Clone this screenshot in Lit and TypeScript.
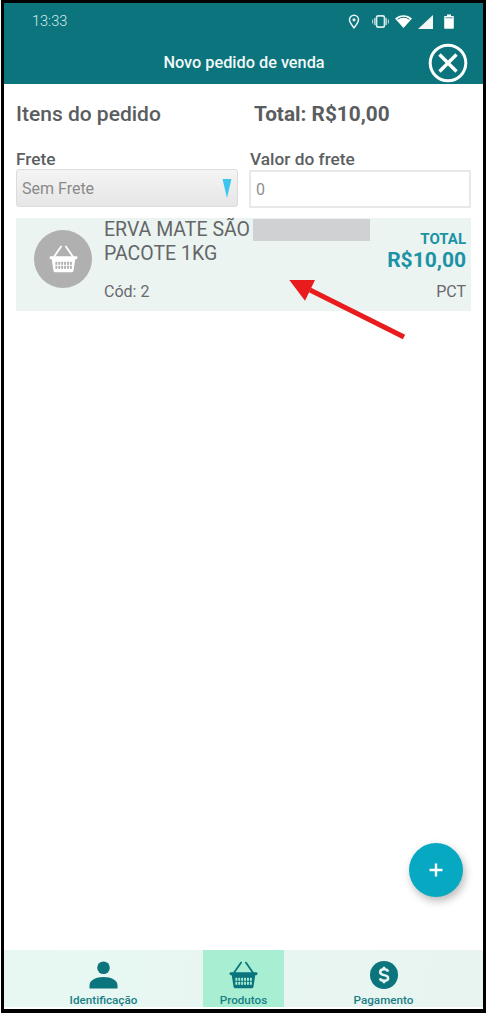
import { LitElement, html, css, svg } from "lit";
import { customElement } from "lit/decorators.js";

const basket = (fg: string, hole: string) => svg`
  <path d="M4 12.5 L11.6 1.6 M24 12.5 L16.4 1.6" stroke="${fg}" stroke-width="1.8" stroke-linecap="round" fill="none"/>
  <rect x="0" y="11.2" width="28" height="3" rx="1.4" fill="${fg}"/>
  <path d="M2.2 14 H25.8 L24 25.8 A1.6 1.6 0 0 1 22.4 27.2 H5.6 A1.6 1.6 0 0 1 4 25.8 Z" fill="${fg}"/>
  ${[0, 1, 2, 3, 4, 5].map((c) =>
    [0, 1].map(
      (r) => svg`<rect x="${5.9 + c * 2.9}" y="${16.8 + r * 4}" width="1.9" height="3" fill="${hole}"/>`
    )
  )}
`;

@customElement("app-root")
export class AppRoot extends LitElement {
  static styles = css`
    :host {
      display: block;
      width: 486px;
      height: 1024px;
      background: #fff;
      font-family: Roboto, "Liberation Sans", sans-serif;
      color: #5c5c5c;
      overflow: hidden;
    }
    * { box-sizing: border-box; }
    .frame {
      position: relative;
      display: flex;
      flex-direction: column;
      width: 485px;
      height: 1013px;
      margin-left: 1px;
      border: solid #000;
      border-width: 3px 3px 4px 3px;
      background: #fff;
    }
    .header {
      height: 81px;
      background: #0b747c;
      color: #fff;
      flex: none;
    }
    .status {
      height: 37px;
      display: flex;
      align-items: center;
      padding: 0 29px 0 28px;
      color: #dcecec;
      font-size: 14.5px;
    }
    .time { flex: 1; font-weight: 300; }
    .sicons { display: flex; align-items: center; gap: 6px; }
    .sicons svg { display: block; }
    .titlebar {
      position: relative;
      display: flex;
      justify-content: center;
      padding: 13px 0 0 1px;
      font-size: 16.3px;
      font-weight: 500;
      color: #f2f8f8;
    }
    .close { position: absolute; right: 15px; top: 3px; }
    .content {
      flex: 1;
      padding: 0 12px;
    }
    .totals {
      display: flex;
      align-items: baseline;
      padding-top: 18px;
      height: 66px;
      font-size: 21px;
      font-weight: 500;
      color: #5a5d60;
    }
    .totals .l { width: 238px; }
    .totals .t { font-weight: 700; font-size: 20.8px; }
    .form {
      display: grid;
      grid-template-columns: 222px 222px;
      column-gap: 11px;
    }
    .field label {
      display: block;
      font-size: 17.3px;
      font-weight: 500;
      color: #5c5f62;
      height: 21px;
      line-height: 21px;
      margin-top: -1px;
    }
    .field + .field label { padding-left: 1px; }
    .select {
      position: relative;
      height: 38px;
      margin-top: -1px;
      display: flex;
      align-items: center;
      padding-left: 5px;
      border: 1px solid #dcdcdc;
      border-radius: 3px;
      background: linear-gradient(#f4f4f4, #e6e6e6);
      font-size: 16px;
      color: #8a8a8a;
    }
    .caret { position: absolute; right: 5px; top: 9px; }
    .input {
      height: 38px;
      display: flex;
      align-items: center;
      padding-left: 5px;
      border: 2px solid #e8e8e8;
      font-size: 16px;
      color: #8f8f8f;
    }
    .item {
      position: relative;
      display: flex;
      height: 93px;
      margin-top: 10px;
      background: #ecf4f2;
    }
    .avatar {
      flex: none;
      width: 58px;
      height: 58px;
      margin: 12px 12px 0 18px;
      border-radius: 50%;
      background: #b0b0b0;
      display: flex;
      align-items: center;
      justify-content: center;
    }
    .info { flex: 1; min-width: 0; }
    .name {
      font-size: 19.5px;
      line-height: 24px;
      color: #646668;
      height: 65px;
    }
    .code { font-size: 16px; color: #68696b; line-height: 18px; }
    .price {
      flex: none;
      padding: 14px 5px 0 0;
      display: flex;
      flex-direction: column;
      align-items: flex-end;
    }
    .price .a { font-size: 15px; line-height: 14px; font-weight: 700; color: #1b93a4; }
    .price .b { font-size: 21px; line-height: 28px; font-weight: 700; color: #1b93a4; }
    .price .c { font-size: 16px; line-height: 18px; color: #68696b; margin-top: 9px; }
    .redact {
      position: absolute;
      left: 237px;
      top: 1px;
      width: 117px;
      height: 22px;
      background: #d0d1d3;
    }
    .arrow { position: absolute; left: 270px; top: 265px; pointer-events: none; }
    .fab {
      position: absolute;
      left: 405px;
      top: 840px;
      width: 54px;
      height: 54px;
      border-radius: 50%;
      background: #06a9c1;
      box-shadow: 2px 4px 8px rgba(0, 0, 0, 0.28);
      display: flex;
      align-items: center;
      justify-content: center;
    }
    .nav {
      flex: none;
      height: 57px;
      margin-bottom: 2px;
      display: flex;
      justify-content: center;
      gap: 59px;
      background: linear-gradient(100deg, #e7f8f3, #e9f4f0);
    }
    .tab {
      width: 81px;
      display: flex;
      flex-direction: column;
      align-items: center;
      font-size: 11.7px;
      font-weight: 500;
      color: #1a7f86;
      white-space: nowrap;
    }
    .tab.active { background: #a8eed2; }
    .tab svg { display: block; margin-top: 11px; height: 28px; }
    .tab span { margin-top: 4px; line-height: 14px; }
  `;

  render() {
    return html`
      <div class="frame">
        <div class="header">
          <div class="status">
            <div class="time">13:33</div>
            <div class="sicons">
              <svg width="12" height="15" viewBox="0 0 12 15" style="margin-right:3px">
                <path d="M6 1.2 A4.5 4.5 0 0 1 10.5 5.7 C10.5 8.6 7.6 11.6 6 13.8 C4.4 11.6 1.5 8.6 1.5 5.7 A4.5 4.5 0 0 1 6 1.2 Z" fill="none" stroke="#e6f2f2" stroke-width="1.5"/>
                <circle cx="6" cy="5.8" r="1.6" fill="#e6f2f2"/>
              </svg>
              <svg width="17" height="13" viewBox="0 0 17 13" style="margin-left:3px">
                <rect x="4.5" y="0.8" width="8" height="11.4" rx="2" fill="none" stroke="#dcecec" stroke-width="1.7"/>
                <rect x="2" y="3" width="1.6" height="7" fill="#a9cfd1"/>
                <rect x="0" y="4.5" width="1.2" height="4" fill="#a9cfd1"/>
                <rect x="13.4" y="3" width="1.6" height="7" fill="#a9cfd1"/>
                <rect x="15.8" y="4.5" width="1.2" height="4" fill="#a9cfd1"/>
              </svg>
              <svg width="17" height="13" viewBox="0 0 17 13">
                <path d="M0 3.6 A12.5 12.5 0 0 1 17 3.6 L8.5 13 Z" fill="#fff"/>
                <path d="M2.6 4.3 A9.5 9.5 0 0 1 14.4 4.3" fill="none" stroke="#0b747c" stroke-width="1"/>
              </svg>
              <svg width="15" height="14" viewBox="0 0 15 14"><path d="M15 0 V14 H0 Z" fill="#f2f8f8"/></svg>
              <svg width="10" height="15" viewBox="0 0 10 15" style="margin-left:5px">
                <path d="M3 0.5 H7 V2 H9 A0.8 0.8 0 0 1 9.8 2.8 V14 A0.8 0.8 0 0 1 9 14.8 H1 A0.8 0.8 0 0 1 0.2 14 V2.8 A0.8 0.8 0 0 1 1 2 H3 Z" fill="#fff"/>
                <rect x="1.3" y="3" width="7.4" height="1.4" fill="#7fb6ba"/>
              </svg>
            </div>
          </div>
          <div class="titlebar">
            Novo pedido de venda
            <svg class="close" width="40" height="40" viewBox="0 0 40 40">
              <circle cx="20" cy="20" r="17.8" fill="none" stroke="#fff" stroke-width="3"/>
              <path d="M11.5 11.5 L28.5 28.5 M28.5 11.5 L11.5 28.5" stroke="#fff" stroke-width="3.4" fill="none"/>
            </svg>
          </div>
        </div>

        <div class="content">
          <div class="totals">
            <div class="l">Itens do pedido</div>
            <div class="t">Total: R$10,00</div>
          </div>
          <div class="form">
            <div class="field">
              <label>Frete</label>
              <div class="select">
                Sem Frete
                <svg class="caret" width="10" height="19" viewBox="0 0 10 19"><path d="M0.5 0 H9.5 L5 19 Z" fill="#3cc6ee"/></svg>
              </div>
            </div>
            <div class="field">
              <label>Valor do frete</label>
              <div class="input">0</div>
            </div>
          </div>
          <div class="item">
            <div class="avatar">
              <svg width="29" height="28" viewBox="0 0 28 28">${basket("#fff", "#b0b0b0")}</svg>
            </div>
            <div class="info">
              <div class="name">ERVA MATE SÃO<br />PACOTE 1KG</div>
              <div class="code">Cód: 2</div>
            </div>
            <div class="price">
              <div class="a">TOTAL</div>
              <div class="b">R$10,00</div>
              <div class="c">PCT</div>
            </div>
            <div class="redact"></div>
          </div>
        </div>

        <div class="nav">
          <div class="tab">
            <svg width="29" height="28" viewBox="0 0 29 28">
              <circle cx="14.5" cy="6.8" r="6.3" fill="#0b747c"/>
              <path d="M0.5 27.5 V24.5 C0.5 19 7 16 14.5 16 S28.5 19 28.5 24.5 V27.5 Z" fill="#0b747c"/>
            </svg>
            <span>Identificação</span>
          </div>
          <div class="tab active">
            <svg width="29" height="28" viewBox="0 0 28 28">${basket("#0b747c", "#a8eed2")}</svg>
            <span>Produtos</span>
          </div>
          <div class="tab">
            <svg width="28" height="28" viewBox="0 0 28 28">
              <circle cx="14" cy="14" r="14" fill="#0b747c"/>
              <path d="M18 10.6 C17.6 9.2 16 8.3 14 8.3 C11.8 8.3 10.2 9.5 10.2 11.2 C10.2 15.2 18.2 13 18.2 17 C18.2 18.8 16.4 19.8 14 19.8 C11.9 19.8 10.3 18.9 9.9 17.4" fill="none" stroke="#e9f6f2" stroke-width="2.5"/>
              <path d="M14 5.8 V8.6 M14 19.6 V22.2" stroke="#e9f6f2" stroke-width="2.5"/>
            </svg>
            <span>Pagamento</span>
          </div>
        </div>

        <div class="fab">
          <svg width="14" height="14" viewBox="0 0 14 14"><path d="M7 0.5 V13.5 M0.5 7 H13.5" stroke="#fff" stroke-width="2.4"/></svg>
        </div>
        <svg class="arrow" width="140" height="80" viewBox="0 0 140 80">
          <path d="M130 69 L36 22" stroke="#e81c1c" stroke-width="5" fill="none"/>
          <path d="M15.3 12 H41 L31 32.7 Z" fill="#e81c1c"/>
        </svg>
      </div>
    `;
  }
}
